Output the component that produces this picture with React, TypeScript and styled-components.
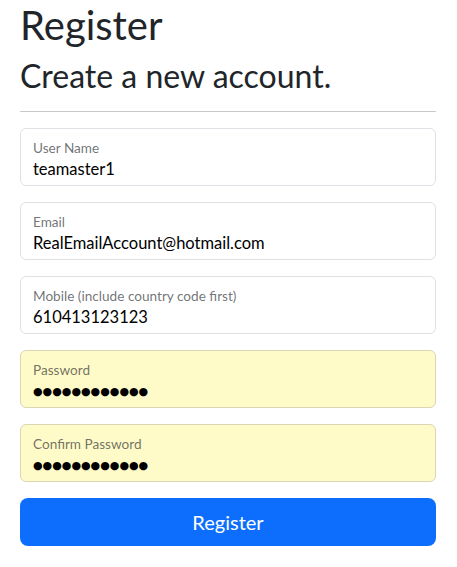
import styled, { createGlobalStyle } from "styled-components";

const GlobalStyle = createGlobalStyle`
  * {
    box-sizing: border-box;
  }
  body {
    margin: 0;
    background: #fff;
    color: #212529;
    font-family: Lato, "Open Sans", sans-serif;
  }
`;

const Page = styled.div`
  padding: 1px 21px 0 20px;
`;

const Title = styled.h1`
  margin: 0 0 8px;
  font-size: 40px;
  font-weight: 400;
  line-height: 48px;
`;

const Subtitle = styled.h2`
  margin: 0 0 8px;
  font-size: 32px;
  font-weight: 400;
  line-height: 38px;
`;

const Rule = styled.hr`
  margin: 16px 0;
  border: 0;
  border-top: 1px solid #c8c9ca;
`;

const Form = styled.form`
  display: flex;
  flex-direction: column;
  gap: 16px;
`;

const Field = styled.div<{ $autofill?: boolean }>`
  height: 58px;
  border: 1px solid ${(p) => (p.$autofill ? "#d9d6b4" : "#dee2e6")};
  border-radius: 6px;
  background: ${(p) => (p.$autofill ? "#fffbc8" : "#fff")};
  padding: 9px 12px 0;
  display: flex;
  flex-direction: column;
`;

const Label = styled.label`
  font-size: 13.6px;
  line-height: 20px;
  color: rgba(33, 37, 41, 0.65);
`;

const Value = styled.div`
  font-size: 16.5px;
  line-height: 23px;
  color: #000;
`;

const Dots = styled.div`
  font-size: 11px;
  line-height: 23px;
  letter-spacing: 0;
  color: #000;
  font-family: "DejaVu Sans", sans-serif;
`;

const SubmitButton = styled.button`
  height: 48px;
  border: 0;
  border-radius: 8px;
  background: #0d6efd;
  color: #fff;
  font-family: inherit;
  font-size: 20px;
  cursor: pointer;
`;

const fields = [
  { label: "User Name", value: "teamaster1" },
  { label: "Email", value: "RealEmailAccount@hotmail.com" },
  { label: "Mobile (include country code first)", value: "610413123123" },
  { label: "Password", value: "", secret: true },
  { label: "Confirm Password", value: "", secret: true },
];

export default function App() {
  return (
    <Page>
      <GlobalStyle />
      <Title>Register</Title>
      <Subtitle>Create a new account.</Subtitle>
      <Rule />
      <Form onSubmit={(e) => e.preventDefault()}>
        {fields.map((f) => (
          <Field key={f.label} $autofill={f.secret}>
            <Label>{f.label}</Label>
            {f.secret ? <Dots>{"●".repeat(12)}</Dots> : <Value>{f.value}</Value>}
          </Field>
        ))}
        <SubmitButton type="submit">Register</SubmitButton>
      </Form>
    </Page>
  );
}
